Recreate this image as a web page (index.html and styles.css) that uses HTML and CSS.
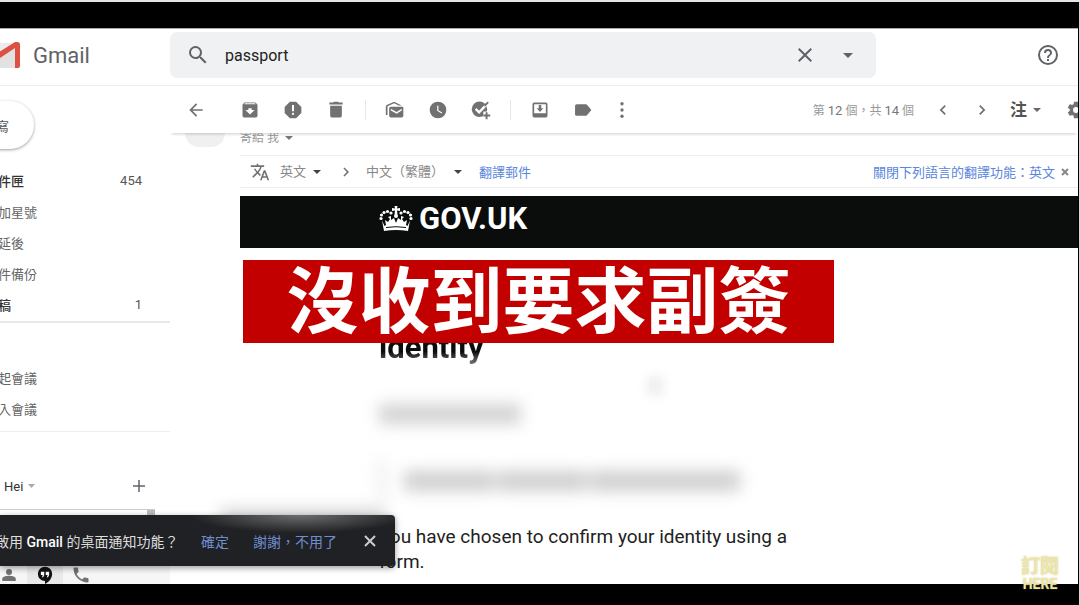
FILE: index.html
```
<!DOCTYPE html>
<html lang="zh-Hant">
<head>
    <meta charset="utf-8">
    <title>Gmail</title>
    <link rel="stylesheet" href="styles.css">
</head>
<body>
    <div class="app">
        <header class="header">
            <div class="brand">
                <svg class="logo" width="20" height="27" viewBox="0 0 20 27">
                    <path d="M0 1h18v25H0z" fill="#ececec"/>
                    <path d="M0 17V9l16-8v25H0z" fill="#e2e2e2"/>
                    <path d="M0 9.500 15 0h2.500Q20 0 20 2.500V24q0 2-2 2h-3V6L0 16z" fill="#dd5144"/>
                </svg>
                <span class="brand-name">Gmail</span>
            </div>
            <form class="search">
                <button type="button" class="icon-btn" aria-label="搜尋">
                    <svg width="24" height="24" viewBox="0 0 24 24"><path d="M15.500 14h-.79l-.28-.27A6.470 6.470 0 0 0 16 9.500 6.500 6.500 0 1 0 9.500 16c1.610 0 3.090-.59 4.230-1.570l.27.28v.79l5 4.990L20.490 19zm-6 0a4.500 4.500 0 1 1 0-9 4.500 4.500 0 0 1 0 9z"/></svg>
                </button>
                <input class="search-input" type="text" value="passport" aria-label="搜尋郵件">
                <button type="button" class="icon-btn" aria-label="清除">
                    <svg width="24" height="24" viewBox="0 0 24 24"><path d="M19 6.410 17.590 5 12 10.590 6.410 5 5 6.410 10.590 12 5 17.590 6.410 19 12 13.410 17.590 19 19 17.590 13.410 12z"/></svg>
                </button>
                <button type="button" class="icon-btn" aria-label="選項">
                    <svg width="10" height="5" viewBox="0 0 10 5"><path d="M0 0h10L5 5z"/></svg>
                </button>
            </form>
            <button type="button" class="icon-btn help" aria-label="說明">
                <svg width="24" height="24" viewBox="0 0 24 24"><path d="M11 18h2v-2h-2zm1-16a10 10 0 1 0 0 20 10 10 0 0 0 0-20zm0 18a8 8 0 1 1 0-16 8 8 0 0 1 0 16zm0-14a4 4 0 0 0-4 4h2a2 2 0 1 1 4 0c0 2-3 1.750-3 5h2c0-2.250 3-2.500 3-5a4 4 0 0 0-4-4z"/></svg>
            </button>
        </header>

        <div class="columns">
            <aside class="sidebar">
                <button type="button" class="compose">寫</button>
                <nav class="folders">
                    <a class="folder unread" href="#">件匣<span class="count">454</span></a>
                    <a class="folder" href="#">加星號</a>
                    <a class="folder" href="#">延後</a>
                    <a class="folder" href="#">件備份</a>
                    <a class="folder unread" href="#">稿<span class="count">1</span></a>
                </nav>
                <nav class="meet">
                    <a class="folder" href="#">起會議</a>
                    <a class="folder" href="#">入會議</a>
                </nav>
                <div class="hangouts">
                    <span>Hei</span>
                    <svg width="7" height="4" viewBox="0 0 7 4" fill="#aaa"><path d="M0 0h7L3.500 4z"/></svg>
                    <button type="button" class="icon-btn add" aria-label="新增">
                        <svg width="18" height="18" viewBox="0 0 24 24"><path d="M20 13h-7v7h-2v-7H4v-2h7V4h2v7h7z"/></svg>
                    </button>
                </div>
                <div class="chat-list"><div class="scroll-thumb"></div></div>
                <div class="chat-tabs">
                    <button type="button" class="tab" aria-label="聯絡人">
                        <svg width="18" height="18" viewBox="0 0 24 24"><circle cx="12" cy="8" r="4"/><path d="M3 20v-3c0-3 6-4 9-4s9 1 9 4v3z"/></svg>
                    </button>
                    <button type="button" class="tab active" aria-label="Hangouts">
                        <svg width="18" height="18" viewBox="0 0 24 24"><path fill="#111" d="M12 1a9.500 9.500 0 0 0 0 19v4c5-2.500 9.500-8 9.500-13.500A9.500 9.500 0 0 0 12 1z"/><path fill="#fff" d="M6.500 7.500h4.500v4.500l-1.500 3H8l1-3H6.500zM13 7.500h4.500v4.500L16 15h-1.500l1-3H13z"/></svg>
                    </button>
                    <button type="button" class="tab" aria-label="電話">
                        <svg width="20" height="20" viewBox="0 0 24 24"><path d="M6.620 10.790a15.150 15.150 0 0 0 6.590 6.590l2.200-2.200c.28-.28.670-.36 1.020-.25 1.120.37 2.320.57 3.570.57.550 0 1 .45 1 1V20c0 .55-.45 1-1 1A17 17 0 0 1 3 4c0-.55.450-1 1-1h3.500c.55 0 1 .45 1 1 0 1.250.2 2.450.57 3.570.11.350.03.740-.25 1.020z"/></svg>
                    </button>
                </div>
            </aside>

            <main class="main">
                <div class="toolbar">
                    <button type="button" class="tool back" aria-label="返回">
                        <svg width="20" height="20" viewBox="0 0 24 24"><path d="M20 11H7.830l5.590-5.590L12 4l-8 8 8 8 1.410-1.410L7.830 13H20z"/></svg>
                    </button>
                    <button type="button" class="tool" aria-label="封存">
                        <svg width="20" height="20" viewBox="0 0 24 24"><path d="M20.540 5.230l-1.390-1.680A1.450 1.450 0 0 0 18 3H6c-.47 0-.88.210-1.160.550L3.460 5.230C3.170 5.570 3 6.020 3 6.500V19a2 2 0 0 0 2 2h14a2 2 0 0 0 2-2V6.500c0-.48-.17-.93-.46-1.270zM12 17.500 6.500 12H10v-2h4v2h3.500zM5.120 5l.82-1h12l.93 1z"/></svg>
                    </button>
                    <button type="button" class="tool" aria-label="回報為垃圾郵件">
                        <svg width="20" height="20" viewBox="0 0 24 24"><path d="M15.730 2H8.270L2 8.270v7.460L8.270 22h7.460L22 15.730V8.270zM12 18a1.300 1.300 0 1 1 0-2.600 1.300 1.300 0 0 1 0 2.600zm1.200-4.500h-2.400V6h2.400z"/></svg>
                    </button>
                    <button type="button" class="tool" aria-label="刪除">
                        <svg width="20" height="20" viewBox="0 0 24 24"><path d="M5 19a2 2 0 0 0 2 2h10a2 2 0 0 0 2-2V7H5zM20 3h-4.500l-1-1h-5l-1 1H4v2.500h16z"/></svg>
                    </button>
                    <span class="divider"></span>
                    <button type="button" class="tool" aria-label="標示為未讀">
                        <svg width="20" height="20" viewBox="0 0 24 24"><path d="M21 8H7a2 2 0 0 0-2 2v9a2 2 0 0 0 2 2h13a2 2 0 0 0 2-2V9q0-1-1-1zm-1 4.500-6 4-7-4v-2l7 4 6-4z"/><path d="M1 18V8q0-1 1-2l9-4 9 4.500h-3.500L11 4 3 7.500V18z"/></svg>
                    </button>
                    <button type="button" class="tool" aria-label="延後">
                        <svg width="20" height="20" viewBox="0 0 24 24"><path d="M12 2a10 10 0 1 0 0 20 10 10 0 0 0 0-20zm4.200 14.200L11 13V7h1.500v5.200l4.500 2.700z"/></svg>
                    </button>
                    <button type="button" class="tool" aria-label="新增至 Tasks">
                        <svg width="20" height="20" viewBox="0 0 26 26"><circle cx="11" cy="12" r="10"/><path d="m6 11.500 4.500 4.500L22 4" fill="none" stroke="#fff" stroke-width="3"/><path d="m17 6 5-4 1 2-5 5z"/><path d="M16 15h8v8h-8z" fill="#fff"/><path d="M19 16h2.500v3H25v2.500h-3.500V25H19v-3.500h-3V19h3z"/></svg>
                    </button>
                    <span class="divider"></span>
                    <button type="button" class="tool" aria-label="移至">
                        <svg width="20" height="20" viewBox="0 0 24 24"><path d="M19 3H5a2 2 0 0 0-2 2v14a2 2 0 0 0 2 2h14a2 2 0 0 0 2-2V5a2 2 0 0 0-2-2zm0 13H5V5h14zm-3-6h-2.500V6h-3v4H8l4 4.500z"/></svg>
                    </button>
                    <button type="button" class="tool" aria-label="標籤">
                        <svg width="20" height="20" viewBox="0 0 24 24"><path d="M16.500 5.500Q16 5 15 5H4.500a2 2 0 0 0-2 2v10a2 2 0 0 0 2 2H15q1 0 1.500-.5L22 12z"/></svg>
                    </button>
                    <button type="button" class="tool more" aria-label="更多">
                        <svg width="20" height="20" viewBox="0 0 24 24"><circle cx="12" cy="4.500" r="2"/><circle cx="12" cy="12" r="2"/><circle cx="12" cy="19.500" r="2"/></svg>
                    </button>
                    <span class="position">第 <b>12</b> 個，共 <b>14</b> 個</span>
                    <button type="button" class="tool page" aria-label="較新">
                        <svg width="20" height="20" viewBox="0 0 24 24"><path d="M15.410 7.410 14 6l-6 6 6 6 1.410-1.410L10.830 12z"/></svg>
                    </button>
                    <button type="button" class="tool page" aria-label="較舊">
                        <svg width="20" height="20" viewBox="0 0 24 24"><path d="M10 6 8.590 7.410 13.170 12l-4.580 4.590L10 18l6-6z"/></svg>
                    </button>
                    <label class="picker input-tool">
                        <select aria-label="輸入工具"><option>注</option></select>
                        <svg width="8" height="4" viewBox="0 0 8 4"><path d="M0 0h8L4 4z"/></svg>
                    </label>
                    <button type="button" class="tool settings" aria-label="設定">
                        <svg width="20" height="20" viewBox="0 0 24 24"><path d="M19.430 12.980c.04-.32.070-.64.070-.98s-.03-.66-.07-.98l2.110-1.650c.190-.15.240-.42.120-.64l-2-3.460a.5.5 0 0 0-.61-.22l-2.490 1a7.300 7.300 0 0 0-1.690-.98l-.38-2.650A.49.490 0 0 0 14 2h-4c-.25 0-.46.180-.49.420l-.38 2.650c-.61.250-1.170.590-1.690.980l-2.490-1a.5.5 0 0 0-.61.220l-2 3.460c-.13.220-.07.490.120.640l2.110 1.650a8 8 0 0 0 0 1.960l-2.110 1.650a.5.5 0 0 0-.12.640l2 3.460c.120.220.390.300.610.220l2.490-1c.520.400 1.080.730 1.690.980l.380 2.650c.030.240.240.420.490.420h4c.250 0 .460-.18.490-.42l.380-2.650c.610-.25 1.170-.59 1.690-.98l2.490 1c.230.090.490 0 .610-.22l2-3.460a.5.5 0 0 0-.12-.64zM12 15.500a3.500 3.500 0 1 1 0-7 3.500 3.500 0 0 1 0 7z"/></svg>
                    </button>
                </div>

                <div class="mail">
                    <div class="avatar-col"><div class="avatar"></div></div>
                    <article class="message">
                        <div class="recipient">
                            寄給 我
                            <svg width="8" height="4" viewBox="0 0 8 4"><path d="M0 0h8L4 4z"/></svg>
                        </div>
                        <div class="translate">
                            <svg class="translate-icon" width="20" height="20" viewBox="0 0 24 24"><path d="m12.870 15.070-2.540-2.510.03-.03A17.520 17.520 0 0 0 14.070 6H17V4h-7V2H8v2H1v2h11.170C11.500 7.920 10.440 9.750 9 11.350 8.070 10.320 7.300 9.190 6.690 8h-2c.730 1.630 1.730 3.170 2.980 4.560l-5.090 5.020L4 19l5-5 3.110 3.110zM18.500 10h-2L12 22h2l1.120-3h4.750L21 22h2zm-2.620 7 1.620-4.330L19.120 17z"/></svg>
                            <label class="picker">
                                <select aria-label="來源語言"><option>英文</option></select>
                                <svg width="8" height="4" viewBox="0 0 8 4"><path d="M0 0h8L4 4z"/></svg>
                            </label>
                            <svg class="arrow" width="18" height="18" viewBox="0 0 24 24"><path d="M10 6 8.590 7.410 13.170 12l-4.580 4.590L10 18l6-6z"/></svg>
                            <label class="picker wide">
                                <select aria-label="目標語言"><option>中文（繁體）</option></select>
                                <svg width="8" height="4" viewBox="0 0 8 4"><path d="M0 0h8L4 4z"/></svg>
                            </label>
                            <a href="#">翻譯郵件</a>
                            <a class="turn-off" href="#">關閉下列語言的翻譯功能：英文</a>
                            <button type="button" class="icon-btn dismiss" aria-label="關閉">
                                <svg width="8" height="8" viewBox="0 0 8 8"><path d="m1 1 6 6M7 1 1 7" stroke="#888" stroke-width="2"/></svg>
                            </button>
                        </div>
                        <div class="govuk">
                            <svg width="34" height="27" viewBox="0 0 34 27" fill="#fff">
                                <path d="M15.500 1h3l-.5 2.500 3-.5v3l-3-.5.500 4h-3l.5-4-3 .5V3l3 .5z"/>
                                <circle cx="17" cy="11" r="2"/><circle cx="12" cy="8" r="1.600"/><circle cx="22" cy="8" r="1.600"/>
                                <circle cx="8.500" cy="6.500" r="1.600"/><circle cx="25.500" cy="6.500" r="1.600"/>
                                <circle cx="5" cy="7.500" r="1.600"/><circle cx="29" cy="7.500" r="1.600"/>
                                <circle cx="2.500" cy="10" r="1.600"/><circle cx="31.500" cy="10" r="1.600"/>
                                <circle cx="2" cy="13.500" r="1.600"/><circle cx="32" cy="13.500" r="1.600"/>
                                <path d="M3 15.500 5.500 21l1.500-1-1-5 3 2 2-3-2-2 3-1v4l3-2 2 5 2-5 3 2v-4l3 1-2 2 2 3 3-2-1 5 1.500 1 2.500-5.500L29 26q-12-2-24 0z"/>
                                <path d="M7 22.500q10-1.600 20 0" fill="none" stroke="#0b0c0c"/>
                            </svg>
                            <span>GOV.UK</span>
                        </div>
                        <div class="content">
                            <h1>identity</h1>
                            <div class="hidden-line greeting"></div>
                            <div class="hidden-line reference"><i></i><i></i><i></i></div>
                            <p>You have chosen to confirm your identity using a<br>form.</p>
                        </div>
                    </article>
                </div>
            </main>
        </div>

        <div class="spot"></div>
        <div class="smudge"></div>
        <div class="toast">
            <span class="toast-text">啟用 <b>Gmail</b> 的桌面通知功能？</span>
            <button type="button" class="toast-action">確定</button>
            <button type="button" class="toast-action">謝謝，不用了</button>
            <button type="button" class="icon-btn toast-close" aria-label="關閉">
                <svg width="12" height="12" viewBox="0 0 12 12"><path d="m1 1 10 10M11 1 1 11" stroke="#ccc" stroke-width="2"/></svg>
            </button>
        </div>
    </div>

    <div class="caption">沒收到要求副簽</div>
    <div class="subscribe"><span>訂閱</span><span class="here">HERE</span></div>
</body>
</html>
```
FILE: styles.css
```
* {
    box-sizing: border-box;
}

body {
    margin: 0;
    height: 100vh;
    position: relative;
    overflow: hidden;
    background: #000;
    border-top: 2px solid #e3e4e6;
    border-right: 1px solid #d5d7d9;
    padding: 26px 1px 21px 0;
    font-family: Roboto, "Noto Sans CJK TC", sans-serif;
    font-size: 13px;
    color: #555;
}

button, input, select {
    font: inherit;
    color: inherit;
    border: 0;
    padding: 0;
    margin: 0;
    background: none;
}

select {
    appearance: none;
}

a {
    color: #5b86dc;
    text-decoration: none;
}

svg {
    display: block;
    flex: none;
}

.app {
    height: 100%;
    position: relative;
    overflow: hidden;
    display: flex;
    flex-direction: column;
    background: #fff;
    border-top: 1px solid #aaa;
}

/* header */
.header {
    flex: none;
    height: 57px;
    display: flex;
    align-items: center;
    padding-bottom: 4px;
    border-bottom: 1px solid #eee;
}

.brand {
    width: 170px;
    flex: none;
    display: flex;
    align-items: center;
    gap: 13px;
}

.brand-name {
    font-size: 22px;
    color: #5f6368;
}

.search {
    flex: 0 1 706px;
    height: 46px;
    display: flex;
    align-items: center;
    padding: 0 7px 0 6px;
    background: #f0f1f3;
    border-radius: 7px;
}

.search-input {
    flex: 1;
    min-width: 0;
    padding-left: 6px;
    font-size: 16px;
    color: #222;
}

.icon-btn {
    width: 43px;
    height: 43px;
    display: flex;
    align-items: center;
    justify-content: center;
    fill: #5f6368;
}

.help {
    margin: 0 9px 0 auto;
}

.columns {
    flex: 1;
    min-height: 0;
    display: flex;
}

/* sidebar */
.sidebar {
    width: 170px;
    flex: none;
    padding-top: 15px;
}

.compose {
    display: block;
    width: 42px;
    height: 48px;
    margin-left: -8px;
    padding-left: 4px;
    text-align: left;
    background: #fff;
    border-radius: 0 24px 24px 0;
    box-shadow: 0 1px 3px rgba(60, 64, 67, 0.5);
}

.folders {
    padding: 16px 0 1px;
    border-bottom: 2px solid #e8e8e8;
}

.folder {
    display: flex;
    align-items: center;
    height: 31px;
    margin-left: -2px;
    padding-right: 28px;
    color: #666;
}

.unread {
    font-weight: 500;
    color: #333;
}

.count {
    margin-left: auto;
    font-weight: 400;
    color: #555;
}

.meet {
    padding: 39px 0 7px;
    border-bottom: 1px solid #eee;
}

.hangouts {
    height: 77px;
    padding: 31px 10px 0 4px;
    display: flex;
    align-items: center;
    gap: 5px;
    color: #333;
}

.add {
    margin-left: auto;
}

.chat-list {
    width: 155px;
    height: 57px;
    border-top: 1px solid #ccc;
}

.scroll-thumb {
    width: 8px;
    height: 8px;
    margin-left: auto;
    background: #bbb;
}

.chat-tabs {
    display: flex;
    margin-left: -9px;
    background: #f6f6f6;
}

.tab {
    width: 36px;
    height: 18px;
    display: flex;
    align-items: center;
    justify-content: center;
    fill: #717171;
}

.tab.active {
    background: #e9e9e9;
}

/* toolbar */
.main {
    flex: 1;
    min-width: 0;
    display: flex;
    flex-direction: column;
}

.toolbar {
    flex: none;
    height: 47px;
    position: relative;
    display: flex;
    align-items: center;
    padding-left: 4px;
    background: #fff;
    box-shadow: 0 3px 3px -2px rgba(0, 0, 0, 0.2);
}

.tool {
    width: 43px;
    height: 40px;
    flex: none;
    display: flex;
    align-items: center;
    justify-content: center;
    fill: #717171;
}

.back {
    margin-right: 11px;
}

.more {
    width: 35px;
}

.page {
    width: 39px;
}

.divider {
    width: 1px;
    height: 20px;
    margin: 0 7px 0 8px;
    background: #e6e6e6;
}

.position {
    margin: 0 9px 0 auto;
    font-size: 12px;
    color: #999;
    white-space: nowrap;
}

.position b {
    font-size: 13px;
    font-weight: 400;
    color: #777;
}

.picker {
    display: flex;
    align-items: center;
    gap: 6px;
    fill: #444;
}

.input-tool {
    margin: 0 25px 0 9px;
    font-size: 17px;
    font-weight: 700;
    fill: #666;
}

.settings {
    width: 20px;
    margin-right: -8px;
}

/* message */
.mail {
    flex: 1;
    min-height: 0;
    display: flex;
}

.avatar-col {
    width: 70px;
    flex: none;
    padding-left: 15px;
}

.avatar {
    width: 40px;
    height: 14px;
    border-radius: 0 0 20px 20px;
    background: #f0f0f0;
}

.message {
    flex: 1;
    min-width: 0;
}

.recipient {
    height: 23px;
    display: flex;
    align-items: center;
    gap: 6px;
    padding-bottom: 12px;
    font-size: 12px;
    line-height: 12px;
    color: #999;
    fill: #777;
    border-bottom: 1px solid #eee;
}

.translate {
    height: 32px;
    display: flex;
    align-items: center;
    padding-left: 10px;
    color: #888;
    white-space: nowrap;
    border-bottom: 1px solid #eee;
}

.translate-icon {
    fill: #717171;
    margin-right: 10px;
}

.arrow {
    margin: 0 11px 0 16px;
    fill: #717171;
}

.wide {
    gap: 9px;
    margin-right: 17px;
}

.turn-off {
    margin-left: auto;
}

.dismiss {
    width: 20px;
    height: 20px;
    margin-right: 3px;
}

.govuk {
    height: 52px;
    margin-top: 8px;
    padding: 0 0 8px 139px;
    display: flex;
    align-items: center;
    gap: 6px;
    background: #0b0c0c;
    color: #fff;
    font-size: 31px;
    font-weight: 700;
}

.content {
    padding: 82px 139px 0;
    color: #222;
}

.content h1 {
    margin: 0;
    font-size: 31px;
    line-height: 36px;
    background: linear-gradient(#0b0c0c 60%, #888);
    background-clip: text;
    color: transparent;
}

.content p {
    margin: 21px -60px 0 0;
    font-size: 19px;
    line-height: 25px;
}

.hidden-line {
    filter: blur(8px);
}

.greeting {
    width: 142px;
    height: 20px;
    margin-top: 38px;
    background: #d2d2d2;
}

.reference {
    height: 44px;
    margin-top: 35px;
    display: flex;
    align-items: center;
    gap: 3px;
    padding-left: 20px;
    border-left: 5px solid #e2e2e2;
}

.reference i {
    width: 90px;
    height: 20px;
    background: #cecece;
}

.reference i:last-child {
    width: 150px;
}

.spot {
    position: absolute;
    left: 646px;
    bottom: 188px;
    width: 18px;
    height: 20px;
    background: #f0f0f0;
    filter: blur(5px);
}

/* notification */
.toast {
    position: absolute;
    left: 0;
    bottom: 18px;
    width: 395px;
    height: 51px;
    overflow: hidden;
    display: flex;
    align-items: center;
    font-size: 14px;
    color: #ddd;
    background: radial-gradient(ellipse 110px 18px at 300px 0, #6b6f6f, transparent), #202124;
    border-radius: 0 4px 4px 0;
    box-shadow: 0 2px 6px rgba(0, 0, 0, 0.4);
}

.smudge {
    position: absolute;
    left: 220px;
    bottom: 60px;
    width: 165px;
    height: 14px;
    background: #ccc;
    filter: blur(8px);
}

.toast-text {
    width: 201px;
    margin-left: -5px;
    white-space: nowrap;
}

.toast-text b {
    font-weight: 500;
    color: #fff;
}

.toast-action {
    margin-left: 5px;
    color: #6e8ed0;
    white-space: nowrap;
}

.toast-action + .toast-action {
    margin-left: 24px;
}

.toast-close {
    margin-left: auto;
    margin-right: 4px;
}

/* video overlays */
.caption {
    position: absolute;
    left: 243px;
    top: 258px;
    width: 591px;
    padding-bottom: 12px;
    background: #c20000;
    color: #fff;
    font-family: "Noto Sans CJK TC", sans-serif;
    font-size: 72px;
    font-weight: 700;
    line-height: 71px;
    text-align: center;
    white-space: nowrap;
}

.subscribe {
    position: absolute;
    right: 20px;
    bottom: 14px;
    display: flex;
    flex-direction: column;
    align-items: center;
    color: #eee6a4;
    font-size: 19px;
    font-weight: 700;
    line-height: 20px;
    text-shadow: 0 0 2px rgba(160, 150, 80, 0.5);
}

.here {
    font-size: 14px;
    line-height: 14px;
}
```
